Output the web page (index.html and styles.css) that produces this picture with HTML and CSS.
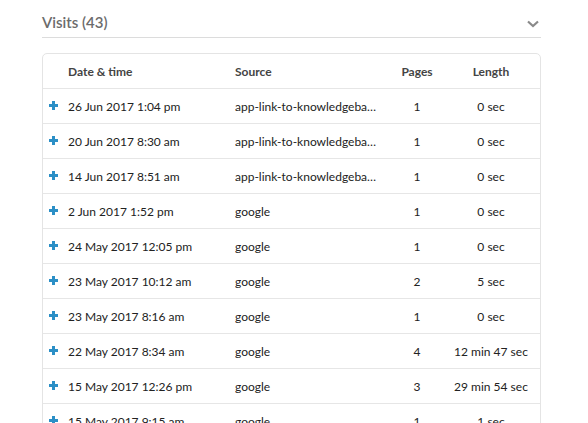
FILE: index.html
```html
<!DOCTYPE html>
<html>
<head>
<meta charset="utf-8">
<link rel="stylesheet" href="styles.css">
</head>
<body>
<div class="panel">
  <div class="panel-head">
    <h2 class="title">Visits (43)</h2>
    <svg class="chevron" width="12" height="8" viewBox="0 0 12 8"><path d="M1 1.5 L6 6 L11 1.5" fill="none" stroke="#8a8a8a" stroke-width="2.2"/></svg>
  </div>
  <div class="card">
    <table class="visits">
      <colgroup><col class="c-date"><col class="c-src"><col class="c-pages"><col class="c-len"></colgroup>
      <thead>
        <tr><th class="date">Date &amp; time</th><th class="src">Source</th><th class="num">Pages</th><th class="num">Length</th></tr>
      </thead>
      <tbody>
        <tr><td class="date"><span class="plus"></span>26 Jun 2017 1:04 pm</td><td class="src">app-link-to-knowledgeba…</td><td class="num">1</td><td class="num">0 sec</td></tr>
        <tr><td class="date"><span class="plus"></span>20 Jun 2017 8:30 am</td><td class="src">app-link-to-knowledgeba…</td><td class="num">1</td><td class="num">0 sec</td></tr>
        <tr><td class="date"><span class="plus"></span>14 Jun 2017 8:51 am</td><td class="src">app-link-to-knowledgeba…</td><td class="num">1</td><td class="num">0 sec</td></tr>
        <tr><td class="date"><span class="plus"></span>2 Jun 2017 1:52 pm</td><td class="src">google</td><td class="num">1</td><td class="num">0 sec</td></tr>
        <tr><td class="date"><span class="plus"></span>24 May 2017 12:05 pm</td><td class="src">google</td><td class="num">1</td><td class="num">0 sec</td></tr>
        <tr><td class="date"><span class="plus"></span>23 May 2017 10:12 am</td><td class="src">google</td><td class="num">2</td><td class="num">5 sec</td></tr>
        <tr><td class="date"><span class="plus"></span>23 May 2017 8:16 am</td><td class="src">google</td><td class="num">1</td><td class="num">0 sec</td></tr>
        <tr><td class="date"><span class="plus"></span>22 May 2017 8:34 am</td><td class="src">google</td><td class="num">4</td><td class="num">12 min 47 sec</td></tr>
        <tr><td class="date"><span class="plus"></span>15 May 2017 12:26 pm</td><td class="src">google</td><td class="num">3</td><td class="num">29 min 54 sec</td></tr>
        <tr><td class="date"><span class="plus"></span>15 May 2017 9:15 am</td><td class="src">google</td><td class="num">1</td><td class="num">1 sec</td></tr>
      </tbody>
    </table>
  </div>
</div>
</body>
</html>
```

FILE: styles.css
```css
html, body {
  margin: 0;
  padding: 0;
  background: #fff;
  font-family: Lato, "Open Sans", "Liberation Sans", sans-serif;
  color: #333;
  overflow: hidden;
}
.panel {
  width: 499px;
  margin-left: 42px;
}
.panel-head {
  height: 38px;
  border-bottom: 1px solid #dcdcdc;
  display: flex;
  align-items: center;
  justify-content: space-between;
  box-sizing: border-box;
}
.title {
  margin: 0;
  font-size: 15px;
  font-weight: 600;
  color: #6b6b6b;
  position: relative;
  top: 3px;
}
.chevron {
  margin-right: 2px;
  position: relative;
  top: 5px;
}
.card {
  margin-top: 15px;
  border: 1px solid #e4e4e4;
  border-radius: 5px;
  overflow: hidden;
}
.visits {
  width: 100%;
  border-collapse: collapse;
  table-layout: fixed;
  font-size: 12px;
}
.c-date { width: 192px; }
.c-src { width: 157px; }
.c-pages { width: 50px; }
.c-len { width: auto; }
.visits th, .visits td {
  height: 34px;
  padding: 0;
  vertical-align: middle;
  white-space: nowrap;
  border-bottom: 1px solid #e6e6e6;
}
.visits th {
  font-weight: 700;
  color: #444;
  text-align: left;
  padding-top: 1px;
  height: 33px;
}
.visits td { color: #222; padding-top: 1px; height: 33px; }
.date { padding-left: 25px !important; position: relative; }
.src { overflow: hidden; text-overflow: ellipsis; padding-right: 6px !important; }
.num { text-align: center !important; }
.plus {
  position: absolute;
  left: 6px;
  top: 50%;
  width: 9px;
  height: 9px;
  margin-top: -5px;
}
.plus::before, .plus::after {
  content: "";
  position: absolute;
  background: #2b8fc6;
}
.plus::before { left: 0; top: 3px; width: 9px; height: 3px; }
.plus::after { left: 3px; top: 0; width: 3px; height: 9px; }
```
